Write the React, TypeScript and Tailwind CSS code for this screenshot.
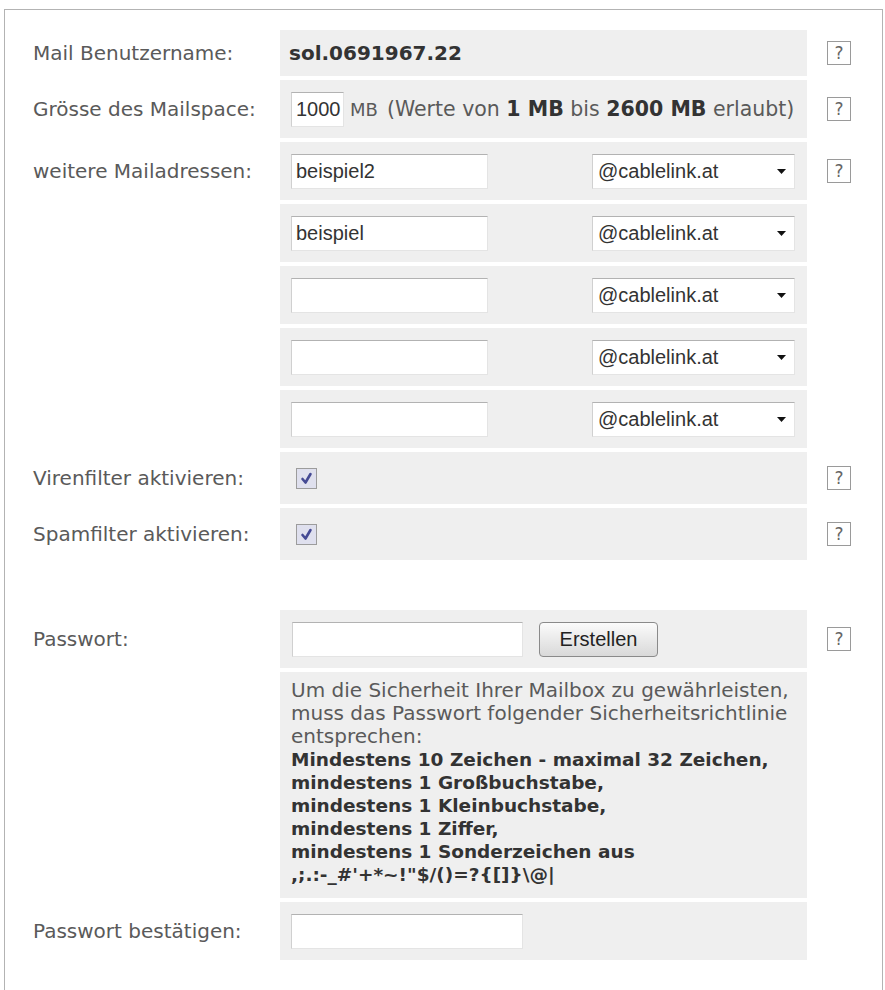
import type { ReactNode } from "react";

const sans = "font-['DejaVu_Sans',Verdana,sans-serif]";
const arial = "font-['Liberation_Sans',Arial,sans-serif]";

const fieldBox =
  "h-[35px] border border-[#e4e4e4] border-t-[#b2b2b2] border-l-[#d0d0d0] bg-white text-[20px] text-[#333]";

function HelpIcon() {
  return (
    <span
      className={`flex h-[24px] w-[24px] items-center justify-center border border-[#9a9a9a] bg-white text-[17px] leading-none text-[#666] ${sans}`}
    >
      ?
    </span>
  );
}

function Row({
  label,
  height,
  help,
  children,
  cellClass = "items-center",
}: {
  label?: string;
  height: string;
  help?: boolean;
  children?: ReactNode;
  cellClass?: string;
}) {
  return (
    <div className={`flex ${height}`}>
      <div className="flex w-[275px] shrink-0 items-center pl-[28px]">
        {label}
      </div>
      <div className={`flex w-[527px] shrink-0 bg-[#efefef] ${cellClass}`}>
        {children}
      </div>
      <div className="flex flex-1 items-center pl-[20px]">
        {help && <HelpIcon />}
      </div>
    </div>
  );
}

function TextBox({ value = "", width }: { value?: string; width: string }) {
  return (
    <div className={`flex items-center px-[4px] ${fieldBox} ${arial} ${width}`}>
      {value}
    </div>
  );
}

function DomainSelect() {
  return (
    <div
      className={`flex w-[203px] items-center justify-between pl-[5px] pr-[8px] ${fieldBox} ${arial}`}
    >
      <span>@cablelink.at</span>
      <svg width="9" height="5" viewBox="0 0 9 5">
        <path d="M0 0h9L4.5 5z" fill="#111" />
      </svg>
    </div>
  );
}

function Checkbox() {
  return (
    <span className="flex h-[21px] w-[21px] items-center justify-center border border-[#9c9c9c] bg-[#dfe0ee]">
      <svg width="15" height="15" viewBox="0 0 15 15">
        <path
          d="M3.5 8l3 3.5L11.5 3"
          fill="none"
          stroke="#454a94"
          strokeWidth="2.6"
          strokeLinecap="round"
          strokeLinejoin="round"
        />
      </svg>
    </span>
  );
}

function AddressRow({ label, value }: { label?: string; value?: string }) {
  return (
    <Row
      label={label}
      height="h-[58px]"
      help={!!label}
      cellClass="items-center justify-between pl-[11px] pr-[12px]"
    >
      <TextBox value={value} width="w-[197px]" />
      <DomainSelect />
    </Row>
  );
}

export default function App() {
  return (
    <div className="min-h-[990px] bg-white pl-[4px] pt-[9px]">
      <div
        className={`min-h-[981px] w-[879px] border border-b-0 border-[#b3b3b3] pt-[20px] text-[20px] text-[#5a5a5a] ${sans}`}
      >
        <div className="flex flex-col gap-[4px]">
          <Row label="Mail Benutzername:" height="h-[46px]" help cellClass="items-center pl-[9px]">
            <span className="font-bold text-[#333]">sol.0691967.22</span>
          </Row>

          <Row label="Grösse des Mailspace:" height="h-[58px]" help cellClass="items-center pl-[11px]">
            <TextBox value="1000" width="w-[53px]" />
            <span className="ml-[6px] text-[18px]">MB</span>
            <span className="ml-[9px] whitespace-nowrap text-[20.5px]">
              (Werte von <b className="text-[#333]">1 MB</b> bis{" "}
              <b className="text-[#333]">2600 MB</b> erlaubt)
            </span>
          </Row>

          <AddressRow label="weitere Mailadressen:" value="beispiel2" />
          <AddressRow value="beispiel" />
          <AddressRow />
          <AddressRow />
          <AddressRow />

          <Row label="Virenfilter aktivieren:" height="h-[52px]" help cellClass="items-center pl-[16px]">
            <Checkbox />
          </Row>
          <Row label="Spamfilter aktivieren:" height="h-[52px]" help cellClass="items-center pl-[16px]">
            <Checkbox />
          </Row>

          {/* leerer Abstand vor dem Passwortblock */}
          <div className="h-[42px]" />

          <Row label="Passwort:" height="h-[58px]" help cellClass="items-center pl-[12px]">
            <TextBox width="w-[231px]" />
            <button
              className={`ml-[16px] h-[35px] w-[119px] rounded-[4px] border border-[#8a8a8a] bg-gradient-to-b from-[#fbfbfb] to-[#d9d9d9] text-[20px] text-[#222] ${arial}`}
            >
              Erstellen
            </button>
          </Row>

          <Row height="h-[226px]" cellClass="flex-col px-[11px] pt-[7px] leading-[23px] whitespace-nowrap">
            <p>
              Um die Sicherheit Ihrer Mailbox zu gewährleisten,
              <br />
              muss das Passwort folgender Sicherheitsrichtlinie
              <br />
              entsprechen:
            </p>
            <p className="text-[18.5px] font-bold text-[#333]">
              Mindestens 10 Zeichen - maximal 32 Zeichen,
              <br />
              mindestens 1 Großbuchstabe,
              <br />
              mindestens 1 Kleinbuchstabe,
              <br />
              mindestens 1 Ziffer,
              <br />
              mindestens 1 Sonderzeichen aus
              <br />
              ,;.:-_#'+*~!"$/()=?{"{[]}"}\@|
            </p>
          </Row>

          <Row label="Passwort bestätigen:" height="h-[58px]" cellClass="items-center pl-[11px]">
            <TextBox width="w-[232px]" />
          </Row>
        </div>
      </div>
    </div>
  );
}
